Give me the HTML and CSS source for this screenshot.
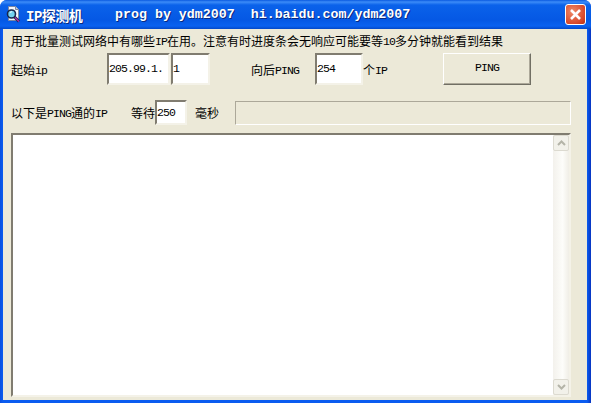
FILE: index.html
```html
<!DOCTYPE html>
<html>
<head>
	<title>IP探测机</title>
	<link rel="stylesheet" href="styles.css">
</head>
<body>
	<div class="window">
		<div class="titlebar">
			<svg class="app-icon" width="16" height="17" viewBox="0 0 16 17">
				<path d="M3.500 .5h7l3 3v11h-10z" fill="#f4f6fa" stroke="#7c88a4"/>
				<path d="M10.500 .5v3h3" fill="#c8d0e0" stroke="#7c88a4"/>
				<circle cx="6.500" cy="8" r="4" fill="#74d2f0" stroke="#18264c" stroke-width="1.600"/>
				<path d="M5 6.500l2-1" stroke="#e4f8ff" stroke-width="1.200"/>
				<path d="M9.500 11l4.500 4.500" stroke="#18264c" stroke-width="3"/>
				<path d="M10 11.500l4 4" stroke="#b030a8" stroke-width="1.400"/>
			</svg>
			<div class="title-name">IP探测机</div>
			<div class="title-text">prog by ydm2007</div>
			<div class="title-text title-url">hi.baidu.com/ydm2007</div>
			<div class="close">
				<svg width="13" height="13" viewBox="0 0 13 13">
					<path d="M2 2l9 9M11 2l-9 9" stroke="#fff" stroke-width="2.600"/>
				</svg>
			</div>
		</div>
		<div class="content">
			<div class="note">用于批量测试网络中有哪些<span class="lat">IP</span>在用。注意有时进度条会无响应可能要等<span class="lat">10</span>多分钟就能看到结果</div>
			<div class="row row-start">
				<div class="label label-start">起始<span class="lat">ip</span></div>
				<div class="field field-ip">205.99.1.</div>
				<div class="field field-last">1</div>
				<div class="label label-count">向后<span class="lat">PING</span></div>
				<div class="field field-count">254</div>
				<div class="label label-unit">个<span class="lat">IP</span></div>
				<div class="button">PING</div>
			</div>
			<div class="row row-wait">
				<div class="label label-list">以下是<span class="lat">PING</span>通的<span class="lat">IP</span></div>
				<div class="label">等待</div>
				<div class="field field-wait">250</div>
				<div class="label label-ms">毫秒</div>
				<div class="progress"></div>
			</div>
			<div class="output">
				<div class="scrollbar">
					<div class="scroll-btn">
						<svg width="9" height="6" viewBox="0 0 9 6"><path d="M1 5l3.500-3.500L8 5" fill="none" stroke="#b4b4a8" stroke-width="2"/></svg>
					</div>
					<div class="scroll-btn">
						<svg width="9" height="6" viewBox="0 0 9 6"><path d="M1 1l3.500 3.500L8 1" fill="none" stroke="#b4b4a8" stroke-width="2"/></svg>
					</div>
				</div>
			</div>
		</div>
	</div>
</body>
</html>
```

FILE: styles.css
```css
* {
	margin: 0;
	padding: 0;
	box-sizing: border-box;
}
body {
	width: 591px;
	height: 403px;
	overflow: hidden;
	background: #fff;
	font-family: "Noto Sans CJK SC", sans-serif;
	font-size: 12px;
	color: #000;
}
.lat {
	font-family: "Liberation Mono", monospace;
	font-size: 11.500px;
	letter-spacing: -0.900px;
	position: relative;
	top: -1px;
}
.window {
	height: 403px;
	display: flex;
	flex-direction: column;
	border-radius: 7px 7px 0 0;
	overflow: hidden;
	background: linear-gradient(90deg, #0a50e0 0, #0a5cf0 3px, #0a5cf0 587px, #0834c0 591px);
}
.titlebar {
	height: 29px;
	flex: none;
	display: flex;
	align-items: center;
	padding: 0 5px;
	background: linear-gradient(#0a5ae0 0, #3c8cf8 2px, #0a62ea 5px, #0558e4 20px, #0a62f0 26px, #0348c8 29px);
	color: #fff;
	font-weight: bold;
}
.app-icon {
	margin-right: 5px;
	flex: none;
}
.title-name {
	width: 89px;
	font-size: 14px;
	letter-spacing: -0.500px;
	text-shadow: 1px 1px 0 #0a2a80;
	font-family: "Liberation Mono", "Noto Sans CJK SC", monospace;
	white-space: nowrap;
}
.title-text {
	font-family: "Liberation Mono", monospace;
	font-size: 13.300px;
	text-shadow: 1px 1px 0 #0a2a80;
	white-space: nowrap;
}
.title-url {
	margin-left: 16px;
}
.close {
	width: 21px;
	height: 21px;
	margin-left: auto;
	display: flex;
	align-items: center;
	justify-content: center;
	border: 1px solid #fff;
	border-radius: 3px;
	background: radial-gradient(circle at 35% 35%, #ee8a68, #d8482a 70%, #b83010);
}
.content {
	flex: 1;
	margin: 0 4px 3px 3px;
	padding: 3px 16px 0 8px;
	background: #ece9d8;
	display: flex;
	flex-direction: column;
}
.note {
	height: 18px;
	line-height: 18px;
	white-space: nowrap;
}
.row {
	display: flex;
	align-items: center;
}
.row-start {
	margin-top: 3px;
	height: 32px;
}
.row-wait {
	margin-top: 15px;
	height: 25px;
}
.label {
	white-space: nowrap;
	flex: none;
}
.label-start {
	width: 96px;
}
.label-count {
	margin-left: 41px;
	width: 64px;
}
.label-unit {
	width: 80px;
}
.label-list {
	width: 120px;
}
.label-ms {
	margin-left: 8px;
	width: 40px;
}
.field {
	height: 32px;
	flex: none;
	background: #fff;
	border: 2px solid;
	border-color: #807c70 #f4f2e8 #f4f2e8 #807c70;
	font-family: "Liberation Mono", monospace;
	font-size: 11.500px;
	letter-spacing: -0.900px;
	line-height: 28px;
	white-space: nowrap;
}
.field-ip {
	width: 63px;
	margin-right: 1px;
}
.field-last {
	width: 39px;
}
.field-count {
	width: 48px;
}
.field-wait {
	width: 32px;
	height: 25px;
	line-height: 21px;
}
.button {
	width: 88px;
	height: 32px;
	flex: none;
	text-align: center;
	line-height: 28px;
	background: #ece9d8;
	border: 1px solid;
	border-color: #fff #716f64 #716f64 #fff;
	box-shadow: inset -1px -1px 0 #aca899;
	font-family: "Liberation Mono", monospace;
	font-size: 11.500px;
	letter-spacing: -0.900px;
}
.progress {
	flex: 1;
	height: 24px;
	border: 1px solid;
	border-color: #aca899 #fff #fff #aca899;
}
.output {
	margin-top: 8px;
	height: 264px;
	background: #fff;
	border: 2px solid;
	border-color: #807c70 #f4f2e8 #f4f2e8 #807c70;
	display: flex;
	justify-content: flex-end;
}
.scrollbar {
	width: 16px;
	background: linear-gradient(90deg, #f3f1ec, #fdfdfa 60%, #f0eee6);
	display: flex;
	flex-direction: column;
	justify-content: space-between;
}
.scroll-btn {
	height: 16px;
	display: flex;
	align-items: center;
	justify-content: center;
	background: #f2f1ea;
	border: 1px solid #dcdad0;
	border-radius: 2px;
}
```
